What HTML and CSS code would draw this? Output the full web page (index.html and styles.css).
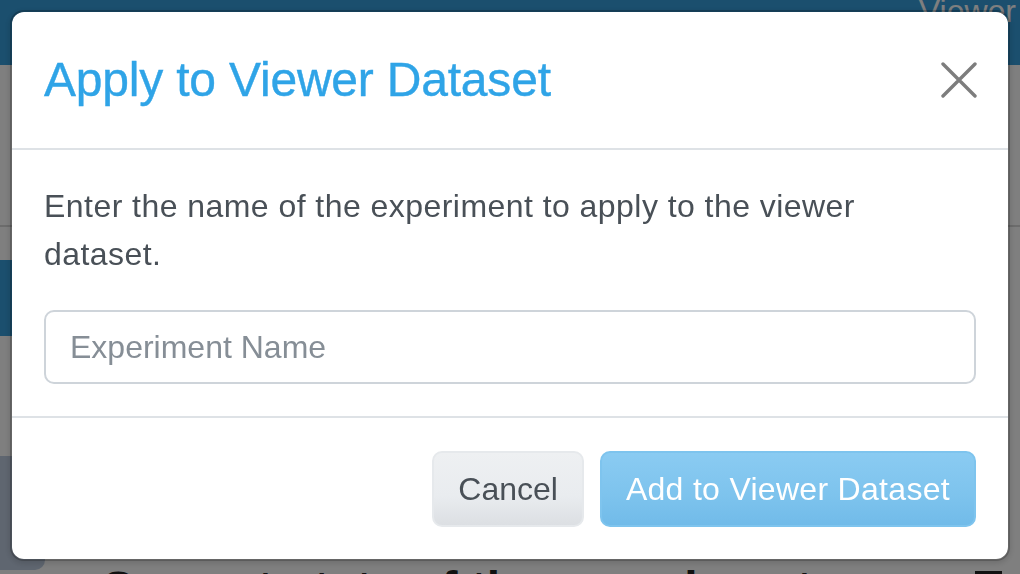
FILE: index.html
```html
<!DOCTYPE html>
<html lang="en">
<head>
<meta charset="utf-8">
<title>Apply to Viewer Dataset</title>
<link rel="stylesheet" href="styles.css">
</head>
<body>
<div class="page">
  <header class="navbar">
    <span class="nav-brand">Viewer</span>
  </header>
  <div class="toolbar"></div>
  <div class="side-tab"></div>
  <div class="bottom-row">
    <div class="side-btn"></div>
    <h2 class="state-heading">Current state of the experiment</h2>
    <span class="state-badge"></span>
  </div>
</div>

<div class="backdrop"></div>

<div class="modal" role="dialog" aria-labelledby="modal-title">
  <div class="modal-header">
    <h4 class="modal-title" id="modal-title">Apply to Viewer Dataset</h4>
    <button class="close" type="button" aria-label="Close">
      <svg width="36" height="36" viewBox="0 0 36 36" aria-hidden="true">
        <path d="M2 2 L34 34 M34 2 L2 34" stroke="currentColor" stroke-width="3.4" stroke-linecap="round" fill="none"/>
      </svg>
    </button>
  </div>
  <div class="modal-body">
    <p class="modal-text">Enter the name of the experiment to apply to the viewer dataset.</p>
    <input class="form-control" type="text" placeholder="Experiment Name">
  </div>
  <div class="modal-footer">
    <button class="btn btn-secondary" type="button">Cancel</button>
    <button class="btn btn-primary" type="button" disabled>Add to Viewer Dataset</button>
  </div>
</div>
</body>
</html>
```
FILE: styles.css
```css
html, body {
  margin: 0;
  padding: 0;
  height: 100%;
  overflow: hidden;
  background: #ffffff;
  font-family: "Liberation Sans", Arial, sans-serif;
}

/* ---------- page behind the modal ---------- */
.page {
  display: flex;
  flex-direction: column;
}

.navbar {
  height: 65px;
  background: #369edc;
  display: flex;
  justify-content: flex-end;
  align-items: flex-start;
  overflow: hidden;
}

.nav-brand {
  color: #ffffff;
  font-size: 32px;
  line-height: 32px;
  margin-top: -5px;
  margin-right: 4px;
}

.toolbar {
  height: 160px;
  border-bottom: 2px solid #d8d8d8;
}

.side-tab {
  margin-top: 33px;
  height: 76px;
  width: 300px;
  background: #369edc;
}

.bottom-row {
  margin-top: 120px;
  display: flex;
  align-items: flex-start;
}

.side-btn {
  width: 45px;
  height: 114px;
  background: #becce0;
  border-radius: 0 0 10px 0;
  flex: none;
}

.state-heading {
  margin: 109px 0 0 55px;
  font-size: 48px;
  line-height: 48px;
  font-weight: 700;
  color: #222222;
  white-space: nowrap;
}

.state-badge {
  margin: 115px 18px 0 auto;
  width: 27px;
  height: 40px;
  background: #222222;
  flex: none;
}

/* ---------- backdrop ---------- */
.backdrop {
  position: fixed;
  inset: 0;
  background: rgba(0, 0, 0, 0.5);
  z-index: 10;
}

/* ---------- modal ---------- */
.modal {
  position: fixed;
  top: 10px;
  left: 10px;
  width: 1000px;
  box-sizing: border-box;
  z-index: 20;
  background: #ffffff;
  border: 2px solid rgba(0, 0, 0, 0.2);
  background-clip: padding-box;
  border-radius: 14px;
  box-shadow: 0 2px 6px rgba(0, 0, 0, 0.15);
  display: flex;
  flex-direction: column;
}

.modal-header {
  display: flex;
  align-items: center;
  justify-content: space-between;
  padding: 32px 32px;
  border-bottom: 2px solid #dee2e6;
}

.modal-title {
  margin: 0;
  font-size: 48px;
  line-height: 72px;
  font-weight: 400;
  color: #2fa4e7;
  letter-spacing: -0.2px;
  -webkit-text-stroke: 0.4px #2fa4e7;
}

.close {
  border: 0;
  background: transparent;
  padding: 0;
  margin: 0 -1px 0 0;
  color: #7d7d7d;
  display: flex;
  cursor: pointer;
}

.modal-body {
  padding: 32px;
}

.modal-text {
  margin: 0 0 32px 0;
  max-width: 880px;
  font-size: 32px;
  line-height: 48px;
  letter-spacing: 0.45px;
  color: #495057;
}

.form-control {
  display: block;
  width: 100%;
  box-sizing: border-box;
  height: 74px;
  padding: 12px 24px;
  font-family: inherit;
  font-size: 32px;
  line-height: 48px;
  color: #495057;
  background: #ffffff;
  border: 2px solid #ced4da;
  border-radius: 10px;
  outline: none;
}

.form-control::placeholder {
  color: #868e96;
  opacity: 1;
}

.modal-footer {
  display: flex;
  justify-content: flex-end;
  align-items: center;
  gap: 16px;
  padding: 33px 32px 32px;
  border-top: 2px solid #dee2e6;
}

.btn {
  box-sizing: border-box;
  height: 76px;
  padding: 12px 24px;
  font-family: inherit;
  font-size: 32px;
  line-height: 48px;
  border: 2px solid transparent;
  border-radius: 10px;
}

.btn-secondary {
  color: #495057;
  background: linear-gradient(#eef0f2, #e9ecef 60%, #dcdfe3);
  border-color: #e6e9ec;
}

.btn-primary {
  color: #ffffff;
  letter-spacing: 0.3px;
  background: linear-gradient(#8acbf2, #7dc3ed 60%, #71bbe9);
  border-color: #7ec4ee;
}
```
